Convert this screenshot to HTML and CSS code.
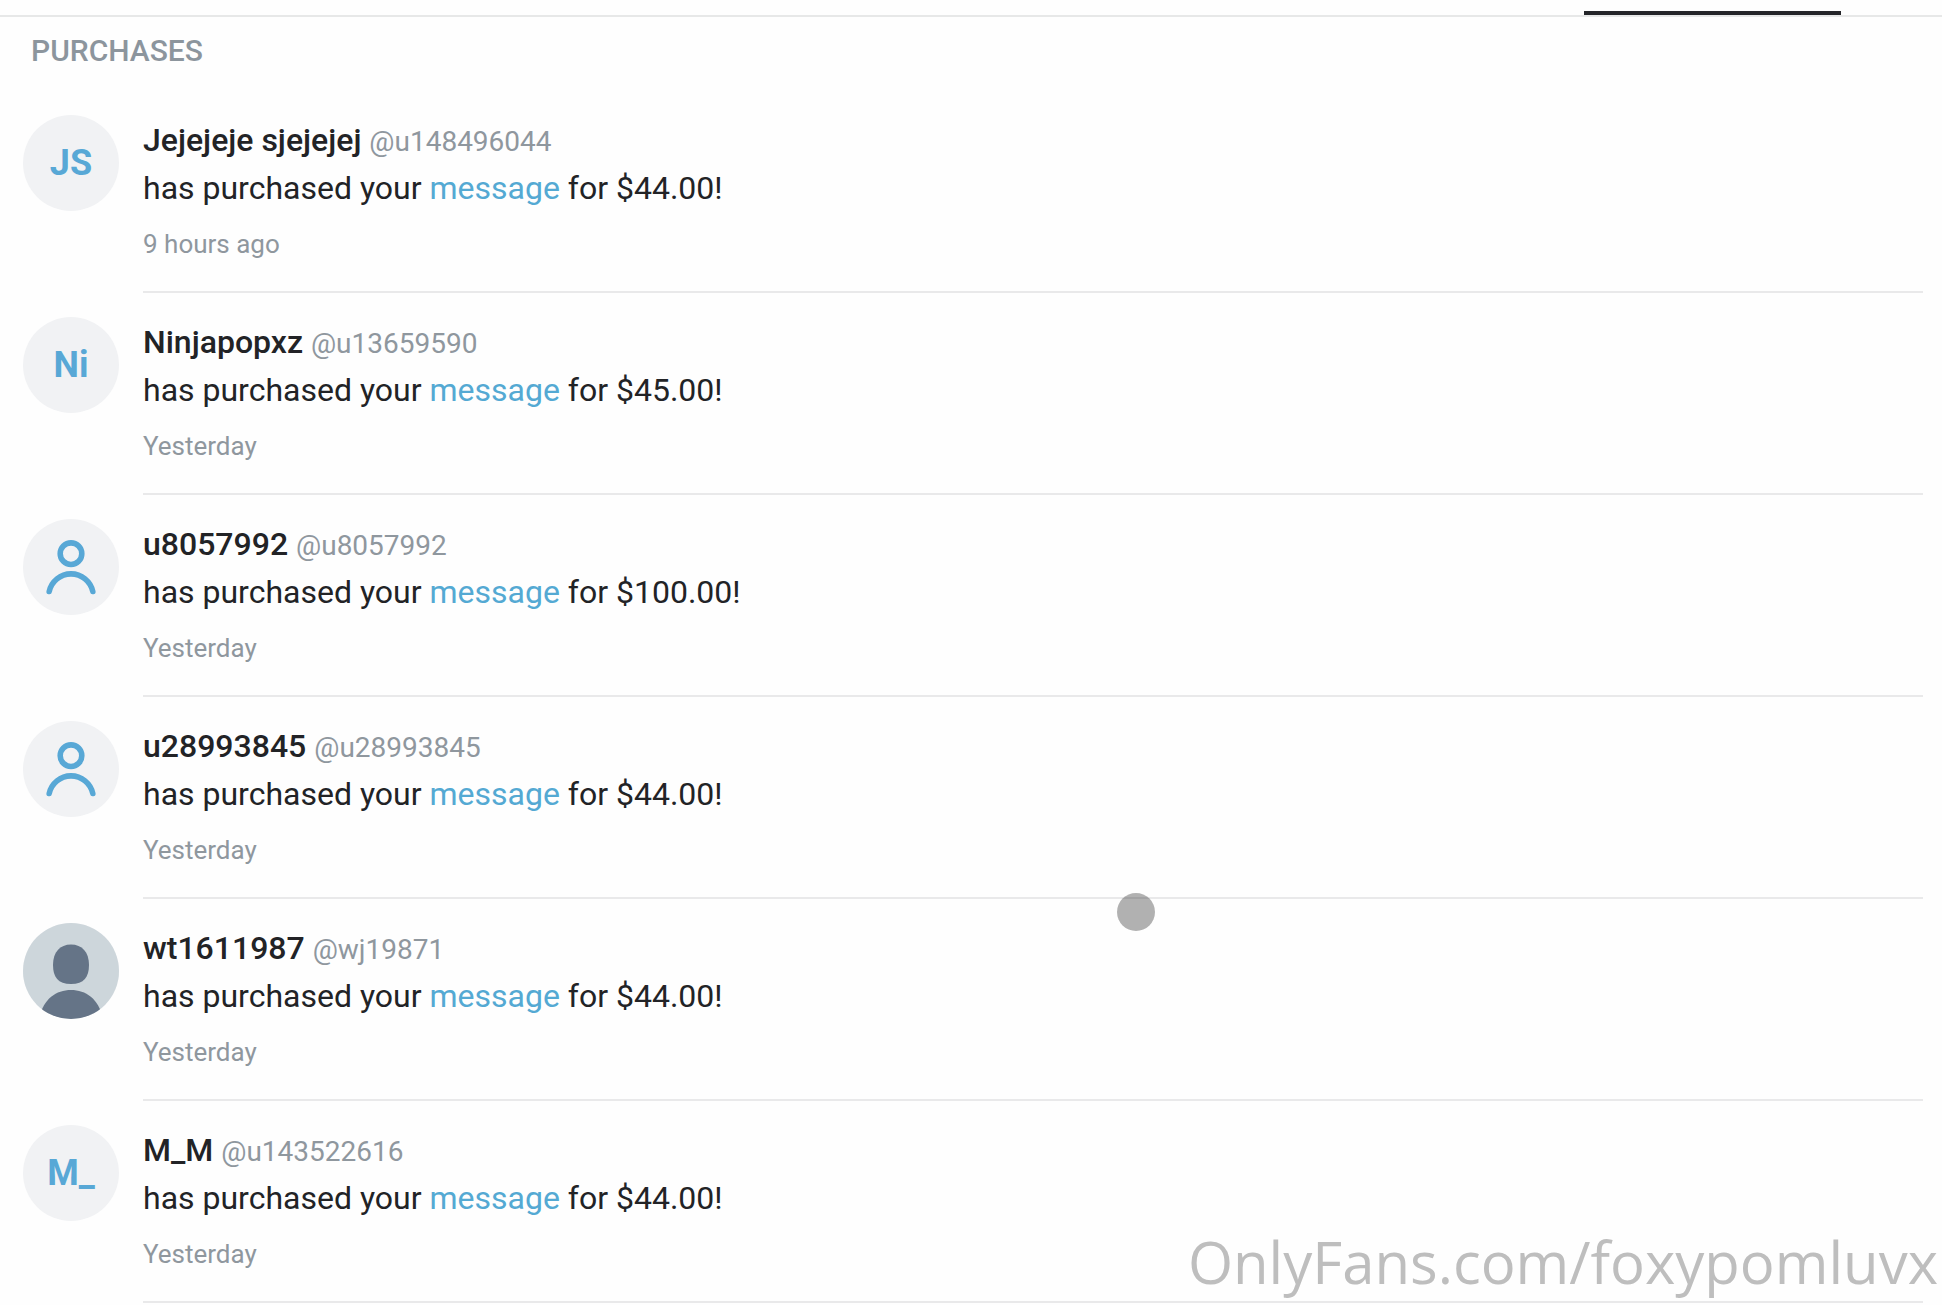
FILE: index.html
```html
<!DOCTYPE html>
<html lang="en">
<head>
<meta charset="utf-8">
<title>Purchases</title>
<meta name="viewport" content="width=device-width, initial-scale=1">
<link rel="stylesheet" href="styles.css">
</head>
<body>
<svg width="0" height="0" class="sprite" aria-hidden="true">
  <symbol id="icon-user" viewBox="0 0 96 96">
    <g fill="none" stroke="currentColor" stroke-width="5.600">
      <circle cx="48" cy="34.700" r="10.800"/>
      <path d="M26.200 72.500A22.300 22.300 0 0 1 69.800 72.500" stroke-linecap="round"/>
    </g>
  </symbol>
  <symbol id="icon-photo" viewBox="0 0 96 96">
    <rect width="96" height="96" fill="#cdd6db"/>
    <path d="M48 21.500C59 21.500 66 29 66 42C66 54 61 61 48 61S30 54 30 42C30 29 37 21.500 48 21.500Z" fill="#657487"/>
    <path d="M16 96C20 76 33 67 48 67S76 76 80 96Z" fill="#657487"/>
  </symbol>
</svg>
<header class="tabs"><div class="tab-active"></div></header>
<main>
  <h1 class="heading">PURCHASES</h1>
  <ul class="list">
    <li class="item">
      <div class="avatar">JS</div>
      <div class="body">
        <p class="line"><strong class="name">Jejejeje sjejejej</strong> <span class="handle">@u148496044</span></p>
        <p class="line">has purchased your <a href="#">message</a> for $44.00!</p>
        <p class="time">9 hours ago</p>
      </div>
    </li>
    <li class="item">
      <div class="avatar">Ni</div>
      <div class="body">
        <p class="line"><strong class="name">Ninjapopxz</strong> <span class="handle">@u13659590</span></p>
        <p class="line">has purchased your <a href="#">message</a> for $45.00!</p>
        <p class="time">Yesterday</p>
      </div>
    </li>
    <li class="item">
      <div class="avatar"><svg><use href="#icon-user"/></svg></div>
      <div class="body">
        <p class="line"><strong class="name">u8057992</strong> <span class="handle">@u8057992</span></p>
        <p class="line">has purchased your <a href="#">message</a> for $100.00!</p>
        <p class="time">Yesterday</p>
      </div>
    </li>
    <li class="item">
      <div class="avatar"><svg><use href="#icon-user"/></svg></div>
      <div class="body">
        <p class="line"><strong class="name">u28993845</strong> <span class="handle">@u28993845</span></p>
        <p class="line">has purchased your <a href="#">message</a> for $44.00!</p>
        <p class="time">Yesterday</p>
      </div>
    </li>
    <li class="item">
      <div class="avatar"><svg><use href="#icon-photo"/></svg></div>
      <div class="body">
        <p class="line"><strong class="name">wt1611987</strong> <span class="handle">@wj19871</span></p>
        <p class="line">has purchased your <a href="#">message</a> for $44.00!</p>
        <p class="time">Yesterday</p>
      </div>
    </li>
    <li class="item">
      <div class="avatar">M_</div>
      <div class="body">
        <p class="line"><strong class="name">M_M</strong> <span class="handle">@u143522616</span></p>
        <p class="line">has purchased your <a href="#">message</a> for $44.00!</p>
        <p class="time">Yesterday</p>
      </div>
    </li>
  </ul>
</main>
<div class="pointer"></div>
<div class="watermark">OnlyFans.com/foxypomluvx</div>
</body>
</html>
```
FILE: styles.css
```css
* {
  box-sizing: border-box;
}

body {
  margin: 0;
  background: #fefefe;
  color: #222326;
  font-family: Roboto, "Liberation Sans", sans-serif;
  font-size: 32px;
  line-height: 48px;
}

.sprite {
  position: absolute;
}

.tabs {
  display: flex;
  justify-content: flex-end;
  padding: 11px 101px 0 0;
  border-bottom: 2px solid #e7e8e8;
}

.tab-active {
  width: 257px;
  height: 4px;
  background: #242529;
}

.heading {
  margin: 0;
  padding: 10px 31px 16px;
  color: #8c959d;
  font-size: 30px;
  font-weight: 500;
  line-height: 48px;
}

.list {
  margin: 0;
  padding: 0 19px 0 23px;
  list-style: none;
}

.item {
  display: flex;
  gap: 24px;
}

.avatar {
  display: flex;
  flex: none;
  align-items: center;
  justify-content: center;
  width: 96px;
  height: 96px;
  margin-top: 24px;
  overflow: hidden;
  border-radius: 50%;
  background: #f1f2f4;
  color: #58a8d6;
  font-size: 36px;
  font-weight: 700;
}

.avatar svg {
  width: 96px;
  height: 96px;
}

.body {
  flex: 1;
  padding: 25px 0 27px;
  border-bottom: 2px solid #e9e9ea;
}

.line {
  margin: 0;
}

.name {
  font-weight: 500;
}

.handle {
  color: #8f979e;
  font-size: 28px;
  line-height: 32px;
}

.line a {
  color: #54a9d3;
  text-decoration: none;
}

.time {
  margin: 12px 0 0;
  color: #8f979e;
  font-size: 26px;
  line-height: 40px;
}

.pointer {
  position: absolute;
  top: 893px;
  left: 1117px;
  width: 38px;
  height: 38px;
  border-radius: 50%;
  background: rgba(0, 0, 0, 0.3);
}

.watermark {
  position: absolute;
  right: 4px;
  bottom: 2px;
  color: #bebebe;
  font-family: "Open Sans", "Noto Sans", sans-serif;
  font-size: 58px;
  font-weight: 400;
  line-height: 82px;
}
```
